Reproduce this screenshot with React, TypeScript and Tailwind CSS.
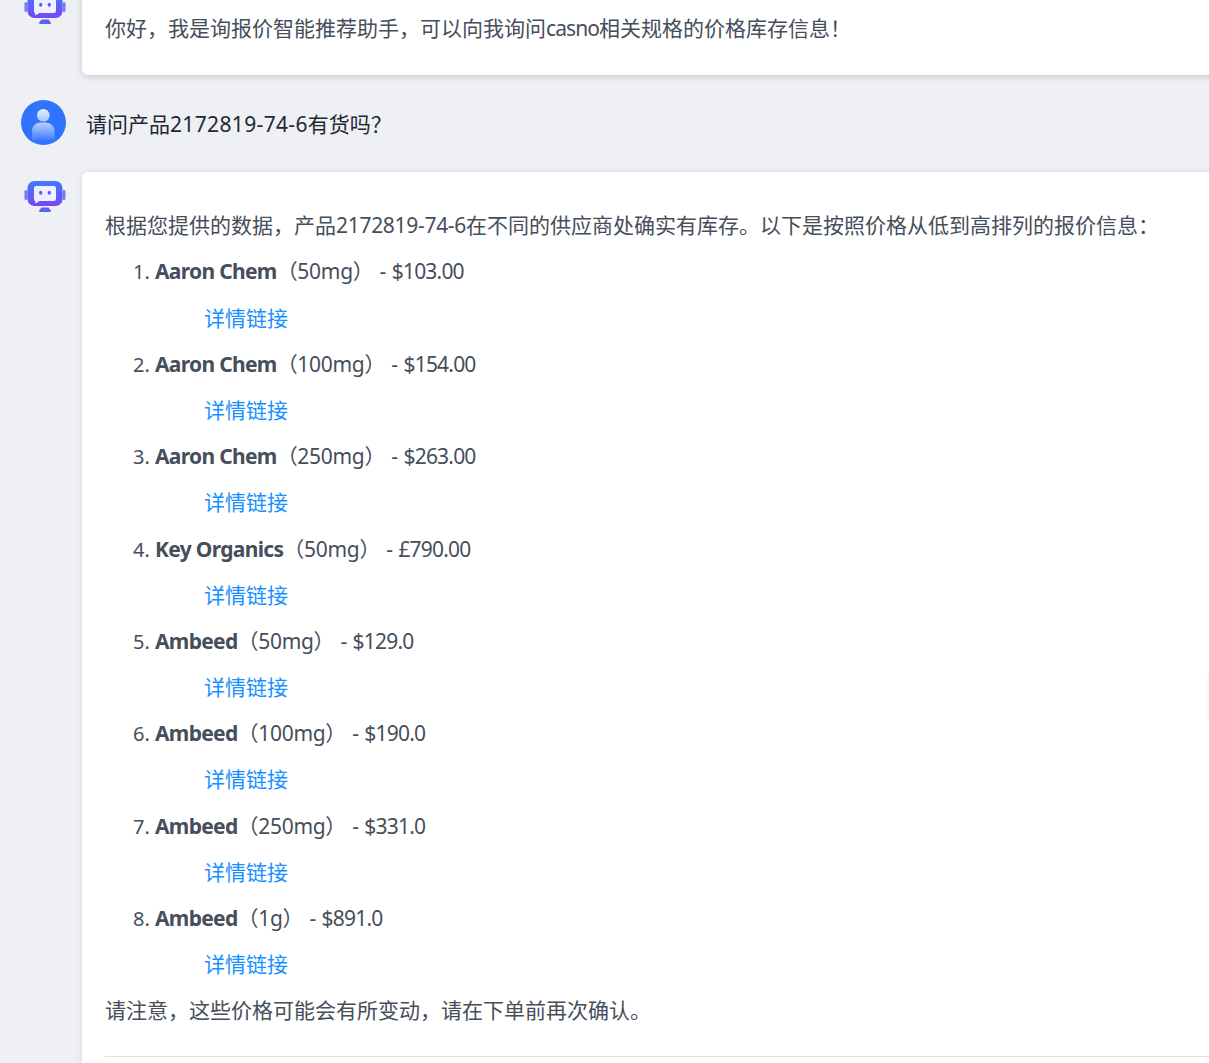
const items = [
  { name: "Aaron Chem", spec: "（50mg）", price: " - $103.00" },
  { name: "Aaron Chem", spec: "（100mg）", price: " - $154.00" },
  { name: "Aaron Chem", spec: "（250mg）", price: " - $263.00" },
  { name: "Key Organics", spec: "（50mg）", price: " - £790.00" },
  { name: "Ambeed", spec: "（50mg）", price: " - $129.0" },
  { name: "Ambeed", spec: "（100mg）", price: " - $190.0" },
  { name: "Ambeed", spec: "（250mg）", price: " - $331.0" },
  { name: "Ambeed", spec: "（1g）", price: " - $891.0" },
];

function BotIcon({ id }: { id: string }) {
  return (
    <svg width="42" height="32" viewBox="0 0 42 32" className="shrink-0">
      <defs>
        <linearGradient id={id} x1="0" y1="0" x2="0" y2="1">
          <stop offset="0" stopColor="#3f7bff" />
          <stop offset="1" stopColor="#7b45f5" />
        </linearGradient>
      </defs>
      <rect x="0.500" y="9" width="3" height="10" rx="1.500" fill="#6f7dfb" />
      <rect x="38.500" y="9" width="3" height="10" rx="1.500" fill="#6f7dfb" />
      <rect x="3.500" y="0" width="35" height="25" rx="7" fill={`url(#${id})`} />
      <path
        d="M12 5h18a2 2 0 0 1 2 2v11a2 2 0 0 1-2 2H15.500l-4 2.500-.5-2.600A2 2 0 0 1 10 18V7a2 2 0 0 1 2-2z"
        fill="#eef0ff"
      />
      <ellipse cx="16.700" cy="11.800" rx="1.700" ry="2" fill="#5a63f5" />
      <ellipse cx="25.300" cy="11.800" rx="1.700" ry="2" fill="#5a63f5" />
      <path d="M17.500 26.500h7l2.300 3a1 1 0 0 1-.8 1.500H16a1 1 0 0 1-.8-1.500z" fill="#5b5ff6" />
    </svg>
  );
}

function UserIcon() {
  return (
    <svg width="45" height="45" viewBox="0 0 45 45" className="shrink-0">
      <defs>
        <linearGradient id="uh" x1="0" y1="0" x2="0" y2="1">
          <stop offset="0" stopColor="#eaf0ff" />
          <stop offset="1" stopColor="#a9c4ff" />
        </linearGradient>
        <linearGradient id="ub" x1="0" y1="0" x2="0" y2="1">
          <stop offset="0" stopColor="#bcd0ff" />
          <stop offset="1" stopColor="#3f7dff" />
        </linearGradient>
      </defs>
      <circle cx="22.500" cy="22.500" r="22.500" fill="#2f73ff" />
      <circle cx="22.300" cy="15.200" r="6.300" fill="url(#uh)" />
      <path d="M11 40V31a8.500 8.500 0 0 1 8.500-8.500h5.600A8.500 8.500 0 0 1 33.500 31v9z" fill="url(#ub)" />
    </svg>
  );
}

export default function App() {
  return (
    <div className="relative h-[1063px] overflow-hidden bg-[#eef0f4] font-['Noto_Sans','Noto_Sans_CJK_SC',sans-serif] text-[21px] leading-[2.2] text-[#464e5b]">
      <div className="-mt-[16px] flex flex-col">
        <div className="flex gap-4 pl-6">
          <div className="pt-[9px]">
            <BotIcon id="bot-a" />
          </div>
          <div className="-mr-8 flex-1 rounded-md bg-white pb-6 pl-[23px] pr-6 pt-[21px] shadow-[0_2px_6px_rgba(60,70,100,0.22)]">
            你好，我是询报价智能推荐助手，可以向我询问<span className="tracking-[-0.9px]">casno</span>相关规格的价格库存信息！
          </div>
        </div>

        <div className="mt-[25px] flex h-[45px] items-center gap-5 pl-[21px] text-[#1f2733]">
          <UserIcon />
          <span className="pt-[2px]">
            请问产品<span className="tracking-[0.35px]">2172819-74-6</span>有货吗？
          </span>
        </div>

        <div className="mt-[27px] flex gap-4 pl-6">
          <div className="pt-[9px]">
            <BotIcon id="bot-b" />
          </div>
          <div className="-mr-8 flex-1 rounded-md bg-white pl-[23px] pr-6 pt-[30px] shadow-[0_0_6px_rgba(60,70,100,0.12)]">
            <p>
              根据您提供的数据，产品<span className="tracking-[-0.3px]">2172819-74-6</span>在不同的供应商处确实有库存。以下是按照价格从低到高排列的报价信息：
            </p>
            <ol className="list-decimal pl-[50px] marker:text-[20px]">
              {items.map((item, i) => (
                <li key={i}>
                  <p>
                    <strong className="font-bold tracking-[-0.68px]">{item.name}</strong>
                    <span className="tracking-[-0.3px]">{item.spec}</span>
                    <span className="tracking-[-0.8px] [word-spacing:1.5px]">{item.price}</span>
                  </p>
                  <p className="pl-[49px] text-[#1890ff]">详情链接</p>
                </li>
              ))}
            </ol>
            <p>请注意，这些价格可能会有所变动，请在下单前再次确认。</p>
            <hr className="mt-[22px] border-[#dfe1e6]" />
            <div className="h-16" />
          </div>
        </div>
      </div>
      <div className="absolute right-0 top-[675px] h-[45px] w-[2px] rounded-l-sm bg-[#f8f8f8]" />
    </div>
  );
}
